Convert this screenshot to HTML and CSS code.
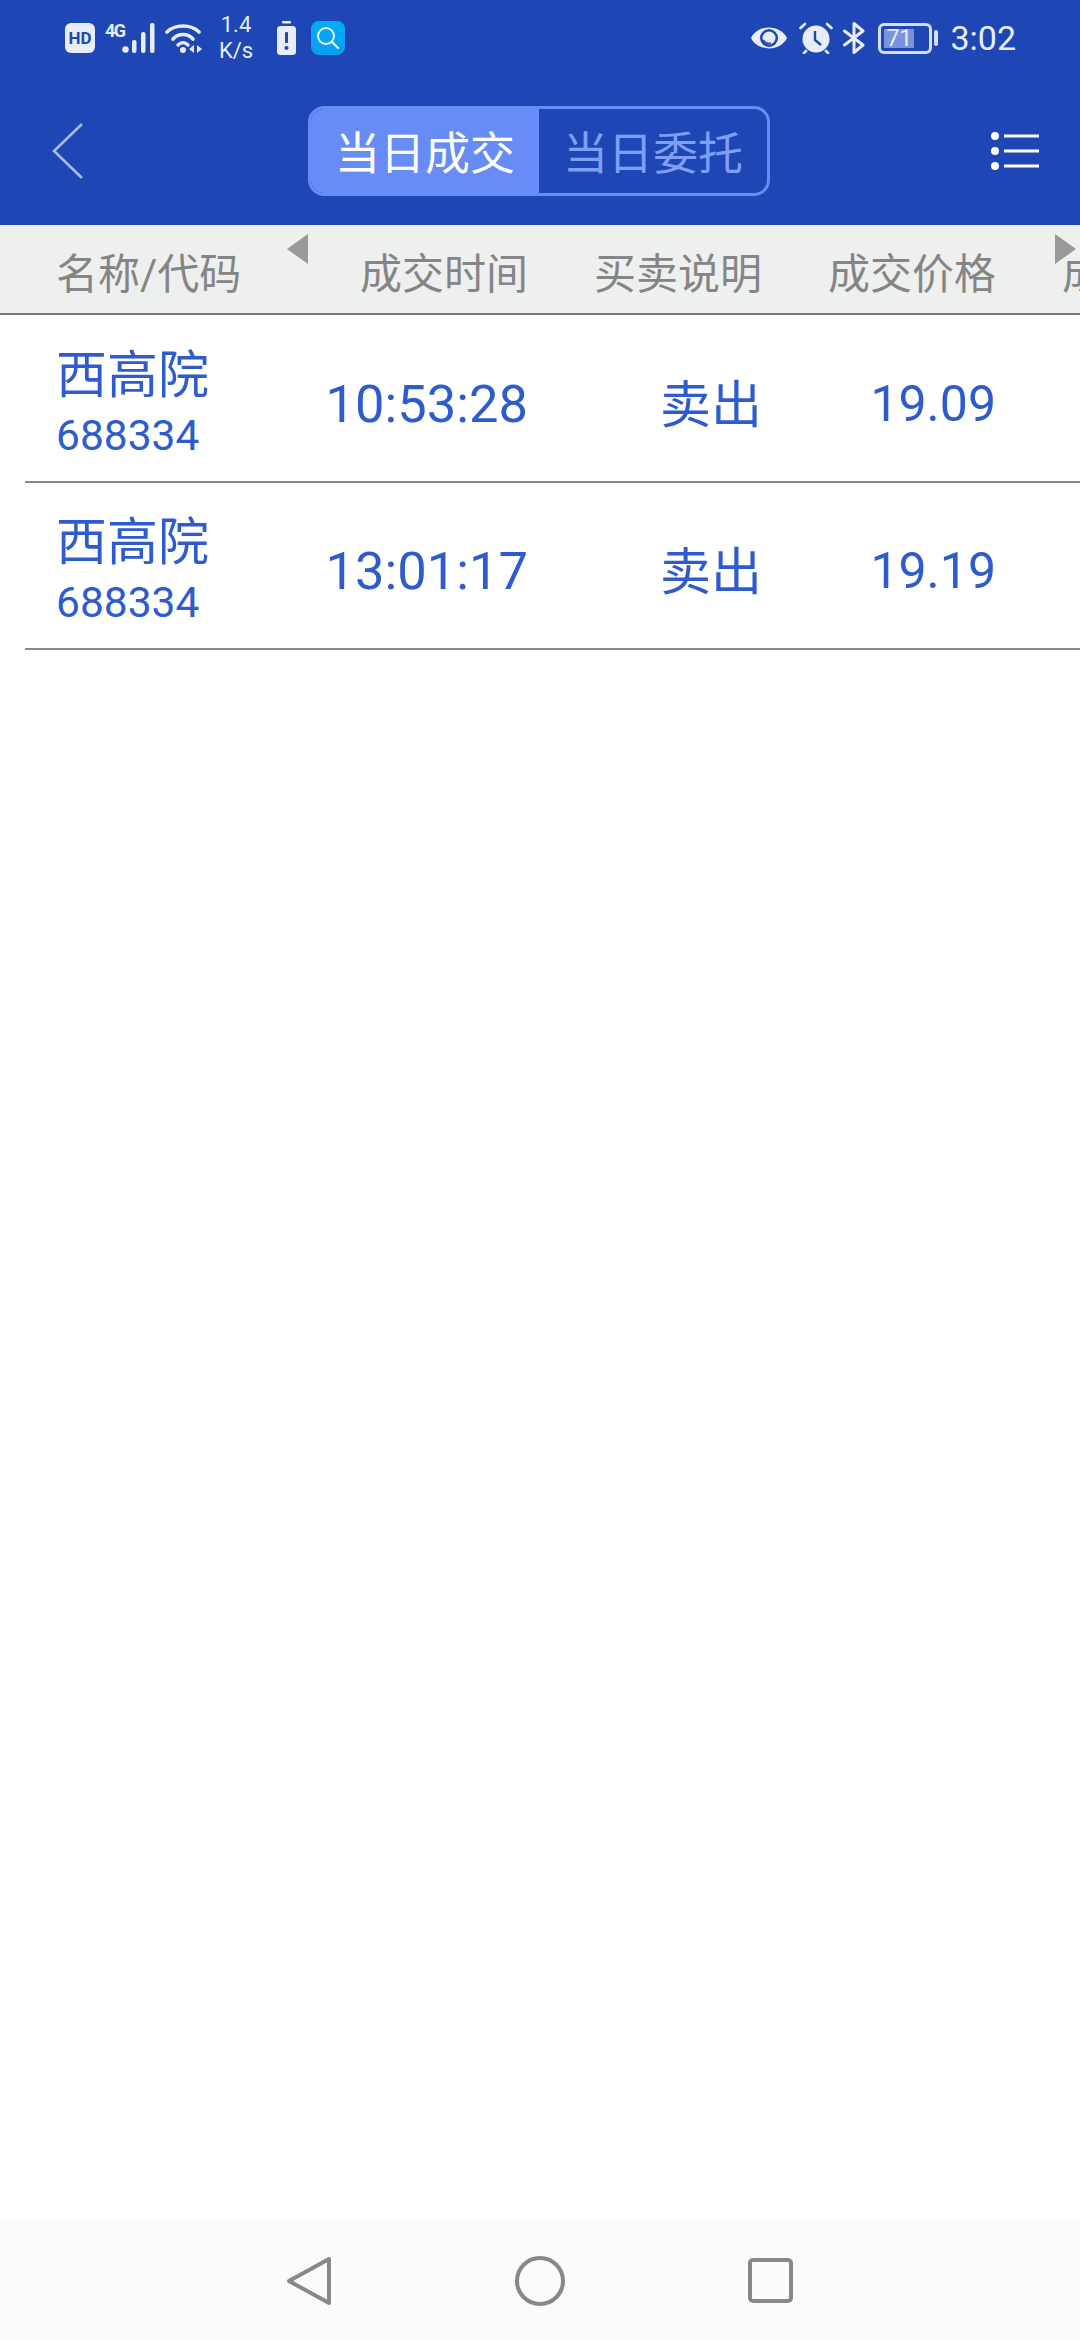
FILE: index.html
```html
<!DOCTYPE html>
<html>
<head>
    <meta charset="UTF-8">
    <title>当日成交</title>
    <link rel="stylesheet" href="styles.css">
</head>
<body>
    <div class="header">
        <div class="status-bar">
            <div class="status-left">
                <span class="hd-badge">HD</span>
                <span class="net">
                    <span class="net-label">4G</span>
                    <svg width="34" height="30" viewBox="0 0 34 30">
                        <circle cx="3.5" cy="26.5" r="3.2" fill="#e8edfa"/>
                        <rect x="10" y="17" width="4.5" height="13" rx="2" fill="#e8edfa"/>
                        <rect x="19" y="9" width="4.5" height="21" rx="2" fill="#e8edfa"/>
                        <rect x="28" y="0" width="4.5" height="30" rx="2" fill="#e8edfa"/>
                    </svg>
                </span>
                <svg class="wifi" width="38" height="32" viewBox="0 0 38 32">
                    <path d="M2 10 C10 2 26 2 34 10" fill="none" stroke="#e8edfa" stroke-width="3.6" stroke-linecap="round"/>
                    <path d="M8 17 C13 11 23 11 28 17" fill="none" stroke="#e8edfa" stroke-width="3.6" stroke-linecap="round"/>
                    <path d="M13 23 C16 20 20 20 23 23" fill="none" stroke="#e8edfa" stroke-width="3.4" stroke-linecap="round"/>
                    <circle cx="18" cy="28" r="3" fill="#e8edfa"/>
                    <path d="M29 23 L24 27 L29 31 Z M32 23 L37 27 L32 31 Z" fill="#e8edfa"/>
                </svg>
                <span class="speed">1.4<br>K/s</span>
                <svg class="saver" width="19" height="34" viewBox="0 0 19 34">
                    <rect x="5" y="0" width="9" height="2.5" rx="1" fill="#e8edfa"/>
                    <rect x="0" y="5" width="19" height="29" rx="3.5" fill="#e8edfa"/>
                    <rect x="8" y="11" width="3" height="11" rx="1" fill="#1e46b4"/>
                    <circle cx="9.5" cy="27" r="2" fill="#1e46b4"/>
                </svg>
                <span class="app-icon">
                    <svg width="34" height="34" viewBox="0 0 34 34">
                        <circle cx="15" cy="15" r="8" fill="none" stroke="#e8f6ff" stroke-width="2"/>
                        <path d="M21 21 L27 27" stroke="#e8f6ff" stroke-width="2.4" stroke-linecap="round"/>
                    </svg>
                </span>
            </div>
            <div class="status-right">
                <svg width="38" height="26" viewBox="0 0 38 26">
                    <path d="M1 13 C8 -1 30 -1 37 13 C30 27 8 27 1 13 Z" fill="#e8edfa"/>
                    <circle cx="19" cy="13" r="9" fill="#1e46b4"/>
                    <circle cx="19" cy="13" r="6.5" fill="#e8edfa"/>
                    <path d="M13 15 C15 18 18 19 21 18" fill="none" stroke="#1e46b4" stroke-width="1.5"/>
                </svg>
                <svg class="alarm" width="34" height="32" viewBox="0 0 34 32">
                    <circle cx="17" cy="17" r="13.5" fill="#e8edfa"/>
                    <path d="M1.5 6 L6 2 M32.5 6 L28 2 M7 29 L5 31 M27 29 L29 31" stroke="#e8edfa" stroke-width="2.6" stroke-linecap="round"/>
                    <path d="M16 9 L16 18 L22 23" fill="none" stroke="#1e46b4" stroke-width="2.4"/>
                </svg>
                <svg class="bluetooth" width="22" height="32" viewBox="0 0 22 32">
                    <path d="M1.5 9 L20 23 L11 30.5 L11 1.5 L20 9 L1.5 23" fill="none" stroke="#e8edfa" stroke-width="3" stroke-linejoin="round" stroke-linecap="round"/>
                </svg>
                <span class="battery">
                    <span class="battery-box">
                        <span class="battery-level">71</span>
                    </span>
                    <span class="battery-nub"></span>
                </span>
                <span class="clock">3:02</span>
            </div>
        </div>
        <div class="title-bar">
            <svg class="back" width="32" height="58" viewBox="0 0 32 58">
                <path d="M30 2 L2 29 L30 56" fill="none" stroke="#a9badf" stroke-width="2.6"/>
            </svg>
            <div class="segment">
                <div class="segment-item active">当日成交</div>
                <div class="segment-item">当日委托</div>
            </div>
            <svg class="menu" width="48" height="38" viewBox="0 0 48 38">
                <circle cx="4" cy="4" r="4" fill="#fff"/>
                <circle cx="4" cy="19" r="4" fill="#fff"/>
                <circle cx="4" cy="34" r="4" fill="#fff"/>
                <path d="M13 4 H48 M13 19 H48 M13 34 H48" stroke="#fff" stroke-width="3"/>
            </svg>
        </div>
    </div>

    <div class="table">
        <div class="table-head">
            <span class="arrow arrow-left"></span>
            <div class="cell-name">名称/代码</div>
            <div class="cell">成交时间</div>
            <div class="cell">买卖说明</div>
            <div class="cell">成交价格</div>
            <div class="cell">成交数量</div>
            <span class="arrow arrow-right"></span>
        </div>
        <div class="table-row">
            <div class="cell-name">
                <div class="stock-name">西高院</div>
                <div class="stock-code">688334</div>
            </div>
            <div class="cell cell-time">10:53:28</div>
            <div class="cell cell-side">卖出</div>
            <div class="cell cell-price">19.09</div>
        </div>
        <div class="table-row">
            <div class="cell-name">
                <div class="stock-name">西高院</div>
                <div class="stock-code">688334</div>
            </div>
            <div class="cell cell-time">13:01:17</div>
            <div class="cell cell-side">卖出</div>
            <div class="cell cell-price">19.19</div>
        </div>
    </div>

    <div class="nav-bar">
        <svg width="60" height="60" viewBox="0 0 60 60">
            <path d="M50 8 L50 52 L10 30 Z" fill="none" stroke="#888" stroke-width="4" stroke-linejoin="round"/>
        </svg>
        <svg width="60" height="60" viewBox="0 0 60 60">
            <circle cx="30" cy="30" r="23" fill="none" stroke="#888" stroke-width="4"/>
        </svg>
        <svg width="60" height="60" viewBox="0 0 60 60">
            <rect x="9" y="9" width="41" height="41" rx="3" fill="none" stroke="#888" stroke-width="4"/>
        </svg>
    </div>
</body>
</html>
```

FILE: styles.css
```css
* {
    box-sizing: border-box;
}

body {
    display: flex;
    flex-direction: column;
    width: 1080px;
    height: 2340px;
    margin: 0;
    overflow: hidden;
    background-color: #fff;
    font-family: "Roboto", "Noto Sans CJK SC", sans-serif;
}

/* Blue header */
.header {
    height: 225px;
    background-color: #1e46b4;
}

.status-bar {
    display: flex;
    justify-content: space-between;
    align-items: center;
    height: 76px;
    padding: 0 64px 0 65px;
    color: #e8edfa;
}

.status-left,
.status-right {
    display: flex;
    align-items: center;
}

.hd-badge {
    display: flex;
    justify-content: center;
    align-items: center;
    width: 30px;
    height: 30px;
    border-radius: 6px;
    background-color: #e8edfa;
    color: #1e46b4;
    font-size: 17px;
    font-weight: 700;
}

.net {
    display: flex;
    align-items: flex-start;
    margin-left: 10px;
}

.net-label {
    width: 17px;
    font-size: 18px;
    font-weight: 700;
    line-height: 15px;
    letter-spacing: -1.5px;
}

.wifi {
    margin-left: 9px;
}

.speed {
    width: 40px;
    margin-left: 13px;
    font-size: 22px;
    line-height: 26px;
    text-align: center;
}

.saver {
    margin-left: 21px;
}

.app-icon {
    width: 34px;
    height: 34px;
    margin-left: 15px;
    border-radius: 8px;
    background: linear-gradient(180deg, #00aef8, #0a9cf0);
}

.app-icon svg {
    display: block;
}

.alarm {
    margin-left: 11px;
}

.bluetooth {
    margin-left: 10px;
}

.battery {
    display: flex;
    align-items: center;
    margin-left: 13px;
}

.battery-box {
    width: 54px;
    height: 31px;
    padding: 3px;
    border: 3px solid #d5ddf4;
    border-radius: 6px;
}

.battery-level {
    display: block;
    width: 71%;
    height: 100%;
    background-color: #7a93dc;
    color: #e8edfa;
    font-size: 23px;
    line-height: 19px;
    text-align: center;
}

.battery-nub {
    width: 4px;
    height: 16px;
    margin-left: 2px;
    border-radius: 2px;
    background-color: #d5ddf4;
}

.clock {
    margin-left: 12px;
    font-size: 34px;
}

.title-bar {
    display: flex;
    justify-content: space-between;
    align-items: center;
    height: 149px;
    padding: 0 41px 0 52px;
}

.segment {
    display: flex;
    width: 462px;
    height: 90px;
    margin-left: 3px;
    border: 3px solid #678cf5;
    border-radius: 16px;
    overflow: hidden;
}

.segment-item {
    display: flex;
    flex: 1;
    justify-content: center;
    align-items: center;
    color: #7f9ff7;
    font-size: 45px;
}

.segment-item.active {
    background-color: #678cf5;
    color: #fff;
}

/* Table */
.table {
    flex: 1;
    overflow: hidden;
    color: #2e5bcd;
}

.table-head,
.table-row {
    display: grid;
    align-items: center;
    width: 1230px;
}

.table-head {
    position: relative;
    grid-template-columns: 294px repeat(4, 234px);
    height: 90px;
    padding-top: 3px;
    border-bottom: 2px solid #777;
    background-color: #eef0ef;
    background-clip: padding-box;
    color: #858585;
    font-size: 42px;
}

.table-row {
    grid-template-columns: 269px repeat(3, 234px);
    height: 167.5px;
    margin-left: 25px;
    border-bottom: 2px solid #888;
    font-size: 51px;
}

.table-head .cell-name {
    padding-left: 56px;
}

.table-row .cell-name {
    padding: 6px 0 0 31px;
}

.cell {
    text-align: right;
    white-space: nowrap;
}

.cell-time {
    padding-top: 12px;
    font-size: 52.5px;
}

.cell-side {
    padding-top: 6px;
}

.cell-price {
    padding-top: 12px;
    font-size: 50px;
}

.stock-name {
    font-size: 51px;
    line-height: 70px;
}

.stock-code {
    font-size: 42.5px;
    line-height: 50px;
}

.arrow {
    position: absolute;
    top: 9px;
    border-top: 15px solid transparent;
    border-bottom: 15px solid transparent;
}

.arrow-left {
    left: 287px;
    border-right: 21px solid #999;
}

.arrow-right {
    left: 1055px;
    border-left: 21px solid #999;
}

/* Android nav bar */
.nav-bar {
    display: flex;
    justify-content: center;
    align-items: center;
    gap: 171px;
    height: 118px;
    background-color: #fbfbfb;
}
```
